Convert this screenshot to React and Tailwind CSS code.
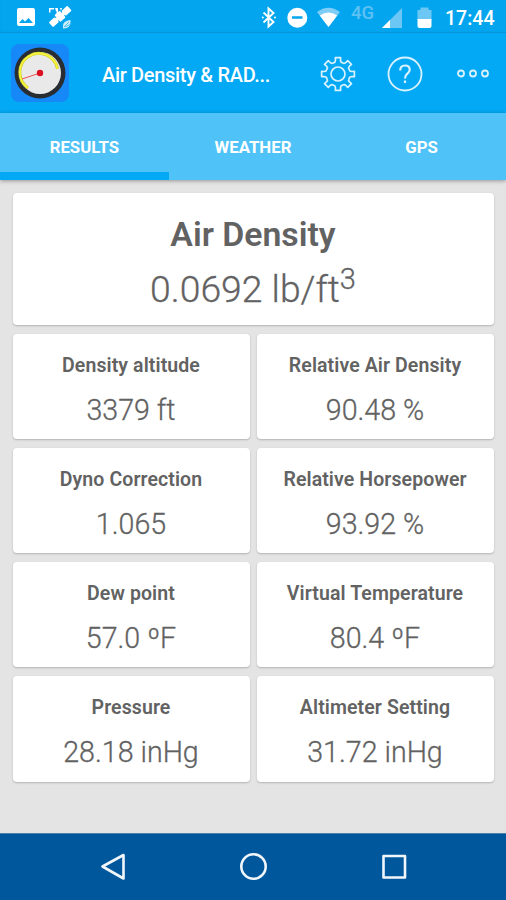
const results = [
  ["Density altitude", "3379 ft"],
  ["Relative Air Density", "90.48 %"],
  ["Dyno Correction", "1.065"],
  ["Relative Horsepower", "93.92 %"],
  ["Dew point", "57.0 ºF"],
  ["Virtual Temperature", "80.4 ºF"],
  ["Pressure", "28.18 inHg"],
  ["Altimeter Setting", "31.72 inHg"],
];

// Outline of an eight-toothed gear centred on (18, 18), with rounded valleys
const gearPath = (() => {
  const at = (a, r) => `${(18 + r * Math.cos(a)).toFixed(2)} ${(18 + r * Math.sin(a)).toFixed(2)}`;
  let d = "";
  for (let i = 0; i < 8; i++) {
    const c = (i * Math.PI) / 4 - Math.PI / 2;
    d += `${i ? "L" : "M"}${at(c - 0.18, 14)}L${at(c - 0.16, 16.6)}L${at(c + 0.16, 16.6)}L${at(c + 0.18, 14)}`;
    d += `Q${at(c + 0.22, 11.8)} ${at(c + Math.PI / 8, 12)}`;
    d += `Q${at(c + Math.PI / 4 - 0.22, 11.8)} ${at(c + Math.PI / 4 - 0.18, 14)}`;
  }
  return `${d}Z`;
})();

function StatusBar() {
  return (
    <div className="flex h-[33px] items-start justify-between bg-[#03a5ef] pr-[10px] pl-[15px] text-white shadow-[inset_0_-1px_1px_#0595d6]">
      <svg className="h-[33px] w-[60px]" viewBox="15 0 60 33" fill="currentColor">
        <path fillRule="evenodd" d="M19 8h14q2 0 2 2v14q0 2-2 2H19q-2 0-2-2V10q0-2 2-2Zm0 15h14l-4.500-5-3.500 3.500-2.500-2.500Z" />
        <g transform="rotate(-42 60 17)">
          <rect x="48" y="13.500" width="8" height="6.500" rx="1" />
          <rect x="57" y="12" width="7" height="9" rx="1" />
          <rect x="65" y="13.500" width="8" height="6.500" rx="1" />
          <rect x="54" y="15" width="13" height="3.500" />
        </g>
        <path d="M49 8h5v1.500h-3.500v3H49Zm6 0h3v5h-1.500v-2H56Zm5 0h2l-1 3Z" />
        <path d="M70.500 20v2q0 6-6.500 6.500h-1q-1-7 5-8Z" opacity=".8" />
        <path d="m64 27 5-5m-4 5 5-2.500" stroke="#03a5ef" strokeWidth=".6" />
      </svg>
      <div className="flex">
        <svg className="h-[33px] w-[180px]" viewBox="260 0 180 33" fill="none">
          <path d="m263.500 12.500 10 9.500-5 4.500V8.500l5 4.500-10 9.500" stroke="#fff" strokeWidth="1.900" />
          <circle cx="262.800" cy="17.500" r="1" fill="#fff" /><circle cx="275" cy="17.500" r="1" fill="#fff" />
          <circle cx="297.300" cy="17.700" r="10" fill="#fff" />
          <path d="M292 17.500h10.500" stroke="#03a5ef" strokeWidth="2.500" />
          <path d="M317 12q11.500-8.500 23 0L328.500 27Z" fill="#7dcdf6" />
          <path d="M319.800 15.500q8.700-6 17.400 0l-8.700 11.500Z" fill="#fff" />
          <path d="M402 8v20h-20Z" fill="#6dc7f5" />
          <path d="M390 20v8h-8Z" fill="#fff" />
          <path d="M417.500 10h3V7.500h8V10h3v10h-14Z" fill="#6dc7f5" />
          <path d="M417.500 19h14v7q0 2-2 2h-10q-2 0-2-2Z" fill="#fff" />
          <text x="351" y="18.500" fill="#5ec1f3" fontSize="18.500" fontWeight="500" fontFamily="Roboto, sans-serif">4G</text>
        </svg>
        <span className="ml-[5px] w-[51px] text-[19.500px] leading-[37px] font-medium whitespace-nowrap">17:44</span>
      </div>
    </div>
  );
}

function AppBar() {
  return (
    <header className="flex h-[80px] items-center bg-[#03a9f4] text-white">
      <svg className="ml-[10px] h-[60px] w-[60px] shrink-0" viewBox="10 43 60 60">
        <rect x="11" y="44" width="58" height="58" rx="8" fill="#1688f7" />
        <circle cx="40" cy="73" r="25.500" fill="#292d31" />
        <circle cx="40" cy="73" r="21" fill="#e9e9ea" />
        <path d="M28 88A19 19 0 1 1 57.500 69" fill="none" stroke="#cccb2b" strokeWidth="3" />
        <path d="M28 88A19 19 0 1 1 57.500 69" fill="none" stroke="#f4f33d" strokeWidth="1.800" />
        <path d="m22 79 18-6" stroke="#ee5555" strokeWidth="1" />
        <circle cx="40" cy="73" r="3.200" fill="#dc1020" />
      </svg>
      <h1 className="mt-[3px] ml-[32px] w-[170px] text-[20px] leading-[28px] font-medium tracking-[-0.320px] whitespace-nowrap">Air Density &amp; RAD...</h1>
      <svg className="mt-[1px] ml-[48px] h-[36px] w-[36px] shrink-0" viewBox="0 0 36 36" fill="none" stroke="#d9f2fe" strokeWidth="1.700" strokeLinejoin="round">
        <path d={gearPath} />
        <circle cx="18" cy="18" r="7" />
      </svg>
      <svg className="mt-[1px] ml-[31px] h-[36px] w-[36px] shrink-0" viewBox="0 0 36 36" fill="none" stroke="#d9f2fe" strokeWidth="1.800">
        <circle cx="18" cy="18" r="16.500" />
        <path d="M13.200 14.500q0-5 4.800-5 4.700 0 4.700 4.200 0 2-2.300 4-2.400 2-2.400 4.800M18 24.500v2.500" strokeWidth="2.200" />
      </svg>
      <svg className="mt-[1px] ml-[33px] h-[36px] w-[34px] shrink-0" viewBox="0 0 34 36" fill="none" stroke="#d9f2fe" strokeWidth="1.800">
        <circle cx="5" cy="17.500" r="3" /><circle cx="17" cy="17.500" r="3" /><circle cx="29" cy="17.500" r="3" />
      </svg>
    </header>
  );
}

export default function App() {
  return (
    <div className="flex h-[900px] w-[506px] flex-col overflow-hidden bg-[#e4e4e4] font-[Roboto,sans-serif] text-[#626262]">
      <StatusBar />
      <AppBar />
      <nav className="grid h-[67px] shrink-0 grid-cols-3 bg-[#4fc3f7] text-center text-[16.800px] leading-[69px] font-bold text-white shadow-[0_1px_4px_rgba(0,0,0,0.35)]">
        <span className="h-[67px] border-b-[8px] border-[#03a9f4]">RESULTS</span>
        <span>WEATHER</span>
        <span>GPS</span>
      </nav>
      <main className="flex grow flex-col px-[12.500px] pt-[13px]">
        <section className="flex h-[132px] shrink-0 flex-col items-center rounded-[4px] bg-white pt-[22px] shadow-[0_1px_2px_rgba(0,0,0,0.22)]">
          <h2 className="text-[33.800px] leading-[40px] font-semibold whitespace-nowrap">Air Density</h2>
          <p className="mt-[9px] text-[37.300px] leading-[50px] font-light whitespace-nowrap [-webkit-text-stroke:0.3px_#626262]">
            0.0692 lb/ft<sup className="top-[-13px] text-[29px] leading-none">3</sup>
          </p>
        </section>
        <div className="mt-[8.600px] grid grid-cols-2 gap-x-[7px] gap-y-[9px]">
          {results.map(([label, value]) => (
            <section key={label} className="flex h-[105.300px] flex-col items-center rounded-[4px] bg-white pt-[19px] shadow-[0_1px_2px_rgba(0,0,0,0.22)]">
              <h3 className="text-[19.500px] leading-[26px] font-semibold tracking-[0.100px] whitespace-nowrap">{label}</h3>
              <p className="mt-[13px] text-[28.600px] leading-[36px] font-light whitespace-nowrap [-webkit-text-stroke:0.3px_#626262]">{value}</p>
            </section>
          ))}
        </div>
      </main>
      <footer className="h-[67px] shrink-0 border-t border-[#4a7fae] bg-[#01579b]">
        <svg className="h-[66px] w-[506px]" viewBox="0 834 506 66" fill="none" stroke="#f1f6fb" strokeWidth="2.600" strokeLinejoin="round">
          <path d="M102.500 866.500 123.500 855v23.500Z" />
          <circle cx="253.500" cy="866.500" r="12.200" />
          <rect x="383.500" y="856" width="21.500" height="21.500" />
        </svg>
      </footer>
    </div>
  );
}
